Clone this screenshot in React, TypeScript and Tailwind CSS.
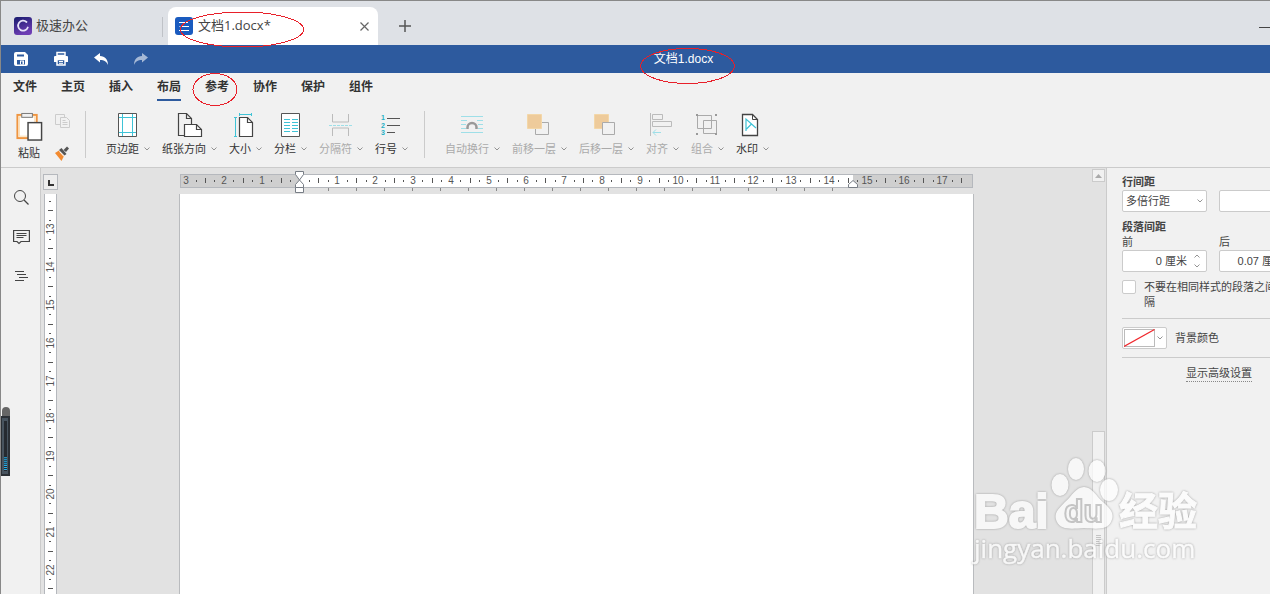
import { ReactNode, useState } from "react";

const CM = 37.8;

const menuTabs = ["文件", "主页", "插入", "布局", "参考", "协作", "保护", "组件"];

function Chevron({ className = "" }: { className?: string }) {
  return (
    <svg width="6" height="4" viewBox="0 0 6 4" fill="none" stroke="#888" strokeWidth="0.900" className={className}>
      <path d="M0.5 0.5 L3 3 L5.5 0.5" />
    </svg>
  );
}

function LogoIcon() {
  return (
    <svg width="18" height="18" viewBox="0 0 18 18">
      <defs>
        <linearGradient id="logo" x1="0" y1="0" x2="0.4" y2="1">
          <stop offset="0" stopColor="#161a6c" />
          <stop offset="1" stopColor="#6d3db4" />
        </linearGradient>
      </defs>
      <rect width="18" height="18" rx="3" fill="url(#logo)" />
      <path d="M12.500 5A5 5 0 1 0 13.800 10.500" fill="none" stroke="#e6e2f8" strokeWidth="1.800" strokeLinecap="round" />
    </svg>
  );
}

function DocIcon() {
  return (
    <svg width="18" height="18" viewBox="0 0 18 18">
      <rect width="18" height="18" rx="3" fill="#1a5bbf" />
      <path d="M4 5.500h9M6.500 9.500h7.500M4 13.500h10" stroke="#fff" strokeWidth="1.200" />
      <path d="M4 9.500h1.500" stroke="#8fb2e6" strokeWidth="1.200" />
    </svg>
  );
}

function TabBar() {
  return (
    <header className="flex h-11 shrink-0 items-end bg-[#dee1e6] text-[13px] text-[#444]">
      <div className="flex h-[38px] w-[161px] items-center gap-1 pl-[13px]">
        <LogoIcon />
        <span>极速办公</span>
      </div>
      <div className="mb-2 h-5 w-px bg-[#bfc2c7]" />
      <div className="ml-[5px] flex h-[38px] w-[210px] items-center gap-[5px] rounded-t-lg bg-white pr-[9px] pl-[7px]">
        <DocIcon />
        <span className="font-['Open_Sans','Noto_Sans_CJK_SC',sans-serif]">文档1.docx*</span>
        <button aria-label="关闭" className="ml-auto text-[#666]">
          <svg width="9" height="9" viewBox="0 0 9 9" stroke="currentColor" strokeWidth="1.200">
            <path d="M0.500 0.500 L8.500 8.500 M8.500 0.500 L0.500 8.500" />
          </svg>
        </button>
      </div>
      <button aria-label="新建" className="ml-[21px] flex h-[38px] items-center text-[#555]">
        <svg width="12" height="12" viewBox="0 0 12 12" stroke="currentColor" strokeWidth="1.500">
          <path d="M6 0V12M0 6H12" />
        </svg>
      </button>
      <button aria-label="最小化" className="mb-[17px] ml-auto h-px w-[11px] bg-[#444]" />
    </header>
  );
}

function TitleBar() {
  return (
    <div className="flex h-7 shrink-0 items-center bg-[#2d5a9e] pl-3 text-white">
      <div className="flex gap-6">
        <button aria-label="保存">
          <svg width="16" height="16" viewBox="0 0 16 16">
            <path d="M1 3a2 2 0 0 1 2-2h9l3 3v9a2 2 0 0 1-2 2H3a2 2 0 0 1-2-2Z" fill="#fff" />
            <path d="M4 3.500h7v2H4ZM4 9h8v4.500H4Z" fill="#2d5a9e" />
            <path d="M7 9.500h4V13.500H7Z" fill="#fff" />
            <path d="M8 10.500h1.500V13H8Z" fill="#2d5a9e" />
          </svg>
        </button>
        <button aria-label="打印">
          <svg width="16" height="16" viewBox="0 0 16 16">
            <path d="M4 1.500h8v3H4Z" fill="#2d5a9e" stroke="#fff" strokeWidth="1.500" />
            <path d="M2 5h12a1 1 0 0 1 1 1v5h-3V9H4v2H1V6a1 1 0 0 1 1-1Z" fill="#fff" />
            <path d="M4 8.500h8V14H4Z" fill="#2d5a9e" stroke="#fff" strokeWidth="1.500" />
            <path d="M6 10.500h4M6 12.300h4" stroke="#fff" />
          </svg>
        </button>
        <button aria-label="撤销">
          <svg width="16" height="16" viewBox="0 0 16 16" fill="#fff">
            <path d="M1 6.500 L7 2v3c5 0 8 3.500 8 9-1.500-3.500-3.500-5-8-5v2.500Z" />
          </svg>
        </button>
        <button aria-label="重做" disabled>
          <svg width="16" height="16" viewBox="0 0 16 16" fill="#a6b9d6">
            <path d="M15 6.500 L9 2v3c-5 0-8 3.500-8 9 1.500-3.500 3.500-5 8-5v2.500Z" />
          </svg>
        </button>
      </div>
      <h1 className="flex-1 pr-[52px] text-center text-xs">文档1.docx</h1>
    </div>
  );
}

function PasteGroup() {
  return (
    <div className="flex h-[50px] gap-3">
      <button className="flex flex-col items-center gap-1 pt-px text-[11px] leading-4 text-[#333]">
        <svg width="28" height="30" viewBox="0 0 28 30" fill="none">
          <rect x="2" y="3" width="20" height="24" fill="#fff" stroke="#ef9540" strokeWidth="2" />
          <rect x="4" y="5" width="16" height="20" stroke="#fbdcae" />
          <rect x="6.500" y="1.500" width="11" height="4" fill="#f1f1f1" stroke="#777" />
          <rect x="13" y="11" width="14" height="18" fill="#fff" stroke="#444" strokeWidth="1.500" />
        </svg>
        粘贴
      </button>
      <div className="flex flex-col justify-between pt-[3px]">
        <button aria-label="复制" disabled>
          <svg width="15" height="15" viewBox="0 0 15 15" fill="#f1f1f1" stroke="#ccc">
            <path d="M0.500 0.500h9v10h-9Z" />
            <path d="M5.500 3.500h6l3 3v7h-9Z" />
            <path d="M7.500 6.500h3M7.500 8.500h5M7.500 10.500h5" />
          </svg>
        </button>
        <button aria-label="格式刷">
          <svg width="15" height="15" viewBox="0 0 15 15">
            <path d="M0 7 L4 4.500 L9 10 L6.500 15 Z" fill="#f28a30" />
            <path d="M4 4 L6.500 2 L11.500 8 L9.500 9.500 Z" fill="#555" />
            <path d="M8.500 4 L12 0.500 L14 2.500 L11 6 Z" fill="#555" />
            <path d="M4.500 5.500 L9 10.500" stroke="#fff" />
          </svg>
        </button>
      </div>
    </div>
  );
}

interface ToolProps {
  label: string;
  disabled?: boolean;
  children: ReactNode;
}

function Tool({ label, disabled, children }: ToolProps) {
  return (
    <button
      disabled={disabled}
      className="flex shrink-0 flex-col items-center gap-0.5 text-[11px] leading-4 text-[#333] disabled:text-[#aaa]"
    >
      <svg width="26" height="28" viewBox="0 0 26 28" fill="none">
        {children}
      </svg>
      <span className="flex items-center gap-[5px]">
        {label}
        <Chevron />
      </span>
    </button>
  );
}

function Toolbar() {
  return (
    <div className="flex items-start pt-2.5 pl-3.5">
      <PasteGroup />
      <div className="ml-[15px] h-[47px] w-px bg-[#cbcbcb]" />
      <div className="ml-5 flex gap-3">
        <Tool label="页边距">
          <path d="M3.500 2.500h18v23h-18Z" fill="#fff" stroke="#555" />
          <path d="M7.500 3v22M17.500 3v22M4 6.500h17M4 21.500h17" stroke="#3fc3d6" />
        </Tool>
        <Tool label="纸张方向">
          <path d="M1.500 2.500h8l5 5v17h-13Z" stroke="#444" strokeWidth="1.200" />
          <path d="M9.500 2.500v5h5" stroke="#444" strokeWidth="1.200" />
          <path d="M7.500 13.500h12l5 5v7h-17Z" fill="#fff" stroke="#444" strokeWidth="1.200" />
          <path d="M19.500 13.500v5h5" stroke="#444" strokeWidth="1.200" />
        </Tool>
        <Tool label="大小">
          <path d="M6.500 6.500h8l5 5v14h-13Z" fill="#fff" stroke="#444" strokeWidth="1.200" />
          <path d="M14.500 6.500v5h5" stroke="#444" strokeWidth="1.200" />
          <path d="M2.500 6v20M1 6.500h3M1 25.500h3M6 3.500h13M6.500 2v3M18.500 2v3" stroke="#3fc3d6" />
        </Tool>
        <Tool label="分栏">
          <path d="M3.500 2.500h18v23h-18Z" fill="#fff" stroke="#555" />
          <path
            d="M6 8.500h6M6 11.500h6M6 14.500h6M6 17.500h6M6 20.500h6M14 8.500h6M14 11.500h6M14 14.500h6M14 17.500h6M14 20.500h6"
            stroke="#3fc3d6"
          />
        </Tool>
        <Tool label="分隔符" disabled>
          <path d="M4.500 3v8h16V3M4.500 25v-8h16v8" stroke="#bbb" />
          <path d="M1 14.500h24" stroke="#9edfe8" strokeDasharray="3 1" />
        </Tool>
        <Tool label="行号">
          <g fill="#24afc4" fontFamily="Liberation Sans" fontWeight="700" fontSize="7">
            <text x="2" y="9">1</text>
            <text x="2" y="17">2</text>
            <text x="2" y="24">3</text>
          </g>
          <path d="M8 7.500h13M8 14.500h13M8 21.500h8" stroke="#555" strokeWidth="1.200" />
        </Tool>
      </div>
      <div className="ml-4 h-[47px] w-px bg-[#cbcbcb]" />
      <div className="ml-5 flex gap-3">
        <Tool label="自动换行" disabled>
          <path d="M1 5.500h22M1 21.500h22M1 9.500h6M17 9.500h6M1 13.500h5M18 13.500h5M1 17.500h5M18 17.500h5" stroke="#9edfe8" />
          <path d="M7.500 18v-1.500a4.500 4.500 0 0 1 9 0V18" stroke="#999" strokeWidth="2.500" />
        </Tool>
        <Tool label="前移一层" disabled>
          <path d="M8.500 11.500h13v12h-13Z" stroke="#aaa" />
          <path d="M0.500 3.500h14v14h-14Z" fill="#eecb9b" stroke="#f3d7a8" />
        </Tool>
        <Tool label="后移一层" disabled>
          <path d="M0.500 3.500h14v14h-14Z" fill="#eecb9b" stroke="#f3d7a8" />
          <path d="M8.500 11.500h12v12h-12Z" fill="#f1f1f1" stroke="#aaa" />
        </Tool>
        <Tool label="对齐" disabled>
          <path d="M0.500 2v23M2.500 3.500h10v5h-10ZM2.500 10.500h19v5h-19Z" stroke="#bbb" />
          <path d="M3 21.500h8M6 18.500l-3 3l3 3" stroke="#9edfe8" />
        </Tool>
        <Tool label="组合" disabled>
          <path d="M2.500 4.500h14v13h-14ZM8.500 9.500h13v13h-13Z" stroke="#aaa" />
          <path d="M1 3h2v2H1ZM20 3h2v2h-2ZM1 22h2v2H1ZM20 22h2v2h-2Z" fill="#999" />
        </Tool>
        <Tool label="水印">
          <path d="M2.500 3.500h10l5 5v16h-15Z" fill="#fff" stroke="#444" strokeWidth="1.300" />
          <path d="M12.500 3.500v5h5" stroke="#444" />
          <path d="M6 20V8l10 9M6.500 18l5-5" stroke="#3fc3d6" strokeWidth="1.200" />
        </Tool>
      </div>
    </div>
  );
}

function Ribbon() {
  const [active, setActive] = useState("布局");

  return (
    <div className="h-[95px] shrink-0 border-b border-[#cbcbcb]">
      <nav className="flex gap-6 pl-3 text-xs leading-7 font-bold text-[#333]">
        {menuTabs.map((tab) => (
          <button
            key={tab}
            onClick={() => setActive(tab)}
            className={`h-7 ${active === tab ? "shadow-[inset_0_-2px_#2d5a9e]" : ""}`}
          >
            {tab}
          </button>
        ))}
      </nav>
      <Toolbar />
    </div>
  );
}

function LeftRail() {
  return (
    <div className="flex w-10 shrink-0 flex-col items-center gap-[22px] border-r border-[#cbcbcb] pt-[21px] pl-px text-[#444]">
      <button aria-label="查找">
        <svg width="17" height="17" viewBox="0 0 17 17" fill="none" stroke="currentColor">
          <circle cx="7" cy="7" r="5.500" />
          <path d="M11 11l4.500 4.500" strokeWidth="1.300" />
        </svg>
      </button>
      <button aria-label="批注">
        <svg width="17" height="17" viewBox="0 0 17 17" fill="none" stroke="currentColor" strokeWidth="1.200">
          <path d="M0.600 2.500h15.800v11H8l-2 2l-2-2H0.600Z" />
          <path d="M3.500 5.500h10M3.500 7.500h10M3.500 9.500h7" strokeWidth="1" />
        </svg>
      </button>
      <button aria-label="导航">
        <svg width="17" height="17" viewBox="0 0 17 17" stroke="currentColor">
          <path d="M2 4.500h9M4 7.500h9M6 10.500h9M2 13.500h9" />
        </svg>
      </button>
    </div>
  );
}

function HorizontalRuler() {
  const origin = 120.5;
  const quarters = Array.from({ length: 83 }, (_, i) => i - 12);

  return (
    <svg width="795" height="26" className="block shrink-0 overflow-visible">
      <rect x="1.500" y="6.500" width="792" height="13" fill="#fff" stroke="#b5b8bd" />
      <rect x="2" y="7" width="118" height="12" fill="#cfcfcf" />
      <rect x="674" y="7" width="119" height="12" fill="#cfcfcf" />
      {quarters.map((q) => {
        const x = Math.round(origin + (q * CM) / 4);
        if (q === 0) return null;
        if (q % 4 === 0) {
          return (
            <text key={q} x={x} y="16" textAnchor="middle" fontFamily="Liberation Sans" fontSize="10" fill="#555">
              {Math.abs(q / 4)}
            </text>
          );
        }
        return q % 2 === 0 ? (
          <rect key={q} x={x} y="10" width="1" height="5" fill="#555" />
        ) : (
          <rect key={q} x={x} y="12" width="1" height="2" fill="#555" />
        );
      })}
      {Array.from({ length: 19 }, (_, i) => (
        <rect key={i} x={149 + i * 28} y="20" width="1" height="3" fill="#888" />
      ))}
      <g fill="#fff" stroke="#777d85">
        <path d="M116.500 3.500h8v3l-4 5.500l-4-5.500Z" />
        <path d="M116.500 19.500v-3l4-4.500l4 4.500v3Z" />
        <path d="M116.500 19.500h8v5h-8Z" />
        <path d="M669.500 19.500v-3l4.500-4l4.500 4v3Z" />
      </g>
    </svg>
  );
}

function VerticalRuler() {
  const origin = -456;
  const quarters = Array.from({ length: 43 }, (_, i) => i + 49);

  return (
    <svg className="ml-[3px] min-h-0 w-[13px] flex-1 border-x border-[#b5b8bd] bg-white">
      {quarters.map((q) => {
        const y = Math.round(origin + (q * CM) / 4);
        if (q % 4 === 0) {
          return (
            <text
              key={q}
              transform={`translate(9 ${y}) rotate(-90)`}
              textAnchor="middle"
              fontFamily="Liberation Sans"
              fontSize="10"
              fill="#555"
            >
              {q / 4}
            </text>
          );
        }
        return q % 2 === 0 ? (
          <rect key={q} x="3" y={y} width="5" height="1" fill="#555" />
        ) : (
          <rect key={q} x="4" y={y} width="2" height="1" fill="#555" />
        );
      })}
    </svg>
  );
}

function Workspace() {
  return (
    <main className="flex min-w-0 flex-1 bg-[#e2e2e2]">
      <div className="flex w-5 shrink-0 flex-col pt-1.5">
        <button aria-label="制表符" className="mb-1 ml-0.5 h-4 w-[15px] border border-[#b5b8bd] bg-[#ededed]">
          <svg width="13" height="14" viewBox="0 0 13 14" fill="none" stroke="#333" strokeWidth="2">
            <path d="M5 5v5h5" />
          </svg>
        </button>
        <VerticalRuler />
      </div>
      <div className="flex min-w-0 flex-1 flex-col items-center">
        <HorizontalRuler />
        <div className="w-[795px] flex-1 border-x border-[#b9bbbe] bg-white" />
      </div>
      <div className="flex w-3.5 shrink-0 flex-col">
        <button
          aria-label="向上滚动"
          className="mt-px flex h-[13px] w-[13px] items-center justify-center border border-[#cbcbcb] bg-[#f1f1f1]"
        >
          <svg width="7" height="4" viewBox="0 0 7 4" fill="#aaa">
            <path d="M0 4L3.500 0L7 4Z" />
          </svg>
        </button>
        <div className="flex-1" />
        <div className="flex h-[163px] w-[13px] flex-col items-center border border-b-0 border-[#cbcbcb] bg-[#f1f1f1] pt-[103px]">
          <svg width="5" height="12" viewBox="0 0 5 12" stroke="#c4c4c4">
            <path d="M0 0.500h5M0 2.500h5M0 4.500h5M0 6.500h5M0 8.500h5M0 10.500h5" />
          </svg>
        </div>
      </div>
    </main>
  );
}

function SpacingInput({ id, label, initial }: { id: string; label: string; initial: string }) {
  const [value, setValue] = useState(initial);

  return (
    <div className="w-[85px]">
      <label htmlFor={id} className="block leading-[15px]">
        {label}
      </label>
      <div className="flex h-[22px] items-center rounded-xs border border-[#cbcbcb] bg-white pr-1.5">
        <input
          id={id}
          value={value}
          onChange={(e) => setValue(e.target.value)}
          className="w-full min-w-0 pr-[7px] text-right outline-none"
        />
        <span className="flex flex-col gap-1.5">
          <button aria-label="增加">
            <Chevron className="rotate-180" />
          </button>
          <button aria-label="减少">
            <Chevron />
          </button>
        </span>
      </div>
    </div>
  );
}

function ParagraphPanel() {
  return (
    <aside className="w-[164px] shrink-0 overflow-hidden border-l border-[#cbcbcb] pt-1.5 pl-[15px] text-[11px] text-[#444]">
      <div className="w-[194px]">
        <label htmlFor="line-spacing" className="block leading-4 font-bold">
          行间距
        </label>
        <div className="flex gap-3">
          <div className="relative w-[85px]">
            <select
              id="line-spacing"
              className="h-[22px] w-full appearance-none rounded-xs border border-[#cbcbcb] bg-white pl-[3px]"
            >
              <option>多倍行距</option>
              <option>单倍行距</option>
            </select>
            <Chevron className="pointer-events-none absolute top-[9px] right-1" />
          </div>
          <input aria-label="行距值" className="h-[22px] w-[85px] rounded-xs border border-[#cbcbcb] bg-white" />
        </div>
        <h2 className="mt-2 leading-[15px] font-bold">段落间距</h2>
        <div className="flex gap-3">
          <SpacingInput id="before" label="前" initial="0 厘米" />
          <SpacingInput id="after" label="后" initial="0.07 厘米" />
        </div>
        <div className="mt-2 flex gap-2 leading-[15px]">
          <input
            type="checkbox"
            id="same-style"
            className="size-3.5 shrink-0 appearance-none rounded-xs border border-[#cbcbcb] bg-white checked:bg-[#2d5a9e]"
          />
          <label htmlFor="same-style">不要在相同样式的段落之间添加间隔</label>
        </div>
        <hr className="mt-2 border-[#cbcbcb]" />
        <div className="mt-2 flex items-center gap-2">
          <button
            id="background"
            aria-label="背景颜色"
            className="flex h-[22px] w-[45px] items-center justify-between rounded-xs border border-[#cbcbcb] bg-white pr-[3px] pl-px"
          >
            <svg width="31" height="18" viewBox="0 0 31 18" fill="none">
              <rect x="0.500" y="0.500" width="30" height="17" stroke="#bbb" />
              <path d="M0 17.500L30.500 0.500" stroke="#f0282d" strokeWidth="1.200" />
            </svg>
            <Chevron />
          </button>
          <label htmlFor="background">背景颜色</label>
        </div>
        <hr className="mt-2 border-[#cbcbcb]" />
        <div className="mt-[7px] text-center">
          <a href="#advanced" className="inline-block border-b border-dotted border-[#888] leading-4">
            显示高级设置
          </a>
        </div>
      </div>
    </aside>
  );
}

function Watermark() {
  return (
    <svg
      width="236"
      height="120"
      className="pointer-events-none absolute right-[62px] bottom-[20px] opacity-75 drop-shadow-[0_0_1px_#888]"
      fill="#fff"
    >
      <g stroke="#fff">
        <text x="2" y="74" fontFamily="Liberation Sans" fontWeight="700" fontSize="48" strokeWidth="2">
          Bai
        </text>
        <text x="147" y="71" fontFamily="Noto Sans CJK SC" fontWeight="700" fontSize="39">
          经验
        </text>
      </g>
      <ellipse cx="88" cy="31" rx="8.500" ry="11" />
      <ellipse cx="104" cy="15" rx="8" ry="11" />
      <ellipse cx="125" cy="17" rx="8.500" ry="11" />
      <ellipse cx="137" cy="36" rx="9" ry="11" />
      <path d="M112 33c8 0 12 9 19 15c8 7 12 12 8 20c-4 8-14 7-27 6c-13 1-23 2-27-6c-4-8 1-13 8-20c7-6 11-15 19-15Z" />
      <text x="92" y="68" fontFamily="Liberation Sans" fontWeight="700" fontSize="32" fill="#fff" stroke="#bbb" strokeWidth="2">
        du
      </text>
      <text x="2" y="104" fontFamily="Open Sans" fontSize="26" stroke="#fff" strokeWidth="0.500">
        jingyan.baidu.com
      </text>
    </svg>
  );
}

function Annotations() {
  return (
    <svg
      width="760"
      height="120"
      className="pointer-events-none absolute top-0 left-0"
      fill="none"
      stroke="#e8202a"
      shapeRendering="crispEdges"
    >
      <ellipse cx="241" cy="28.500" rx="61.500" ry="17.500" />
      <ellipse cx="686.500" cy="65" rx="47" ry="17.500" />
      <ellipse cx="214" cy="88.500" rx="22" ry="16" />
    </svg>
  );
}

function FloatingMeter() {
  return (
    <div className="absolute top-[406px] -left-px w-2.5">
      <div className="ml-0.5 h-[9px] w-2 rounded-t-full bg-[#666]" />
      <div className="flex h-[60px] flex-col items-center border-2 border-[#2b3036] bg-[#48545f] py-[3px]">
        <svg width="3" height="51" viewBox="0 0 3 51">
          <rect width="3" height="51" fill="#252a30" />
          <path d="M1.500 37V51" stroke="#22b3ee" strokeWidth="3" strokeDasharray="1 1" />
        </svg>
      </div>
    </div>
  );
}

function App() {
  return (
    <div className="relative flex h-screen flex-col overflow-hidden border-t border-l border-[#888] bg-[#f1f1f1] font-['Liberation_Sans','Noto_Sans_CJK_SC',sans-serif]">
      <TabBar />
      <TitleBar />
      <Ribbon />
      <div className="flex min-h-0 flex-1">
        <LeftRail />
        <Workspace />
        <ParagraphPanel />
      </div>
      <FloatingMeter />
      <Annotations />
      <Watermark />
    </div>
  );
}

export default App;
